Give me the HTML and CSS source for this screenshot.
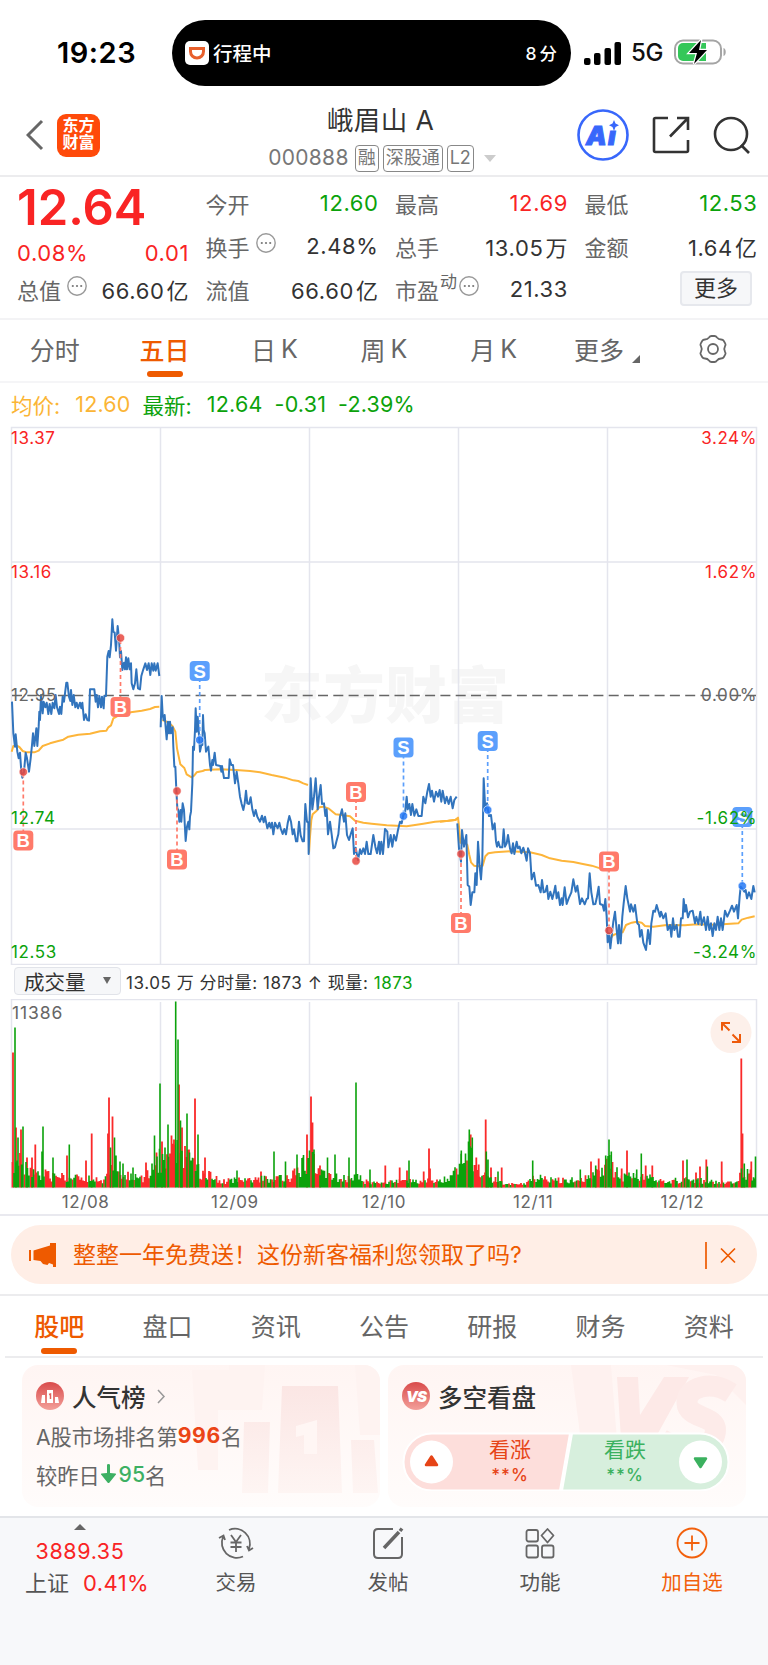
FILE: index.html
```html
<!DOCTYPE html>
<html lang="zh-CN">
<head>
  <meta charset="UTF-8">
  <meta name="viewport" content="width=device-width, initial-scale=1.0">
  <title>峨眉山A 000888</title>
  <link rel="stylesheet" href="styles.css">
</head>
<body>
  <div class="status">
    <span class="time">19:23</span>
    <div class="island">
      <svg width="24" height="24" viewBox="0 0 24 24"><rect width="24" height="24" rx="5" fill="#fff"/><path d="M5.500 7.500h13v3a6.500 6.500 0 0 1-13 0z" fill="none" stroke="#e8602c" stroke-width="3"/></svg>
      <span>行程中</span>
      <span class="eta">8<u>分</u></span>
    </div>
    <svg class="signal" width="37" height="23" viewBox="0 0 37 23"><rect y="16" width="6.500" height="7" rx="2"/><rect x="10" y="11" width="6.500" height="12" rx="2"/><rect x="20.500" y="6" width="6.500" height="17" rx="2"/><rect x="30.500" width="6.500" height="23" rx="2"/></svg>
    <span class="net">5G</span>
    <svg class="battery" width="53" height="26" viewBox="0 0 53 26"><rect x="1" y="1.500" width="46" height="23" rx="8" fill="none" stroke="#a5a5a5" stroke-width="2"/><path d="M49.500 9c3 1 3 7 0 8z" fill="#a5a5a5"/><path d="M9 4h23v18H9a5 5 0 0 1-5-5V9a5 5 0 0 1 5-5z" fill="#34c759"/><path d="M27 1L15 14h8l-3 11 13-14h-8z" stroke="#fff" stroke-width="2.500" paint-order="stroke"/></svg>
  </div>

  <header class="header">
    <div class="left">
      <svg width="18" height="32" viewBox="0 0 18 32"><path d="M16 2L2 16l14 14" fill="none" stroke="#666" stroke-width="3"/></svg>
      <div class="logo">东方<br>财富</div>
    </div>
    <div class="title">
      <h1>峨眉山 A</h1>
      <div class="code">000888 <i>融</i><i>深股通</i><i>L2</i><b></b></div>
    </div>
    <div class="right">
      <svg width="52" height="52" viewBox="0 0 52 52"><circle cx="26" cy="26" r="24.500" fill="#fff" stroke="#3867fb" stroke-width="2.600"/><text x="9" y="36" class="ai">A</text><text x="31" y="36" class="ai">ı</text><path d="M37 11l1.500 3.500 3.500 1.800-3.500 1.700L37 22l-1.500-4-3.500-1.700 3.500-1.800z" fill="#3867fb"/></svg>
      <svg width="38" height="38" viewBox="0 0 38 38" fill="none" stroke="#333" stroke-width="2.600"><path d="M16 2H3.500Q2 2 2 3.500v31Q2 36 3.500 36h31q1.500 0 1.500-1.500V24M25 2h11v12M36 2L18 20.500"/></svg>
      <svg width="38" height="38" viewBox="0 0 38 38" fill="none" stroke="#333" stroke-width="2.600"><circle cx="18" cy="18" r="16"/><path d="M28 29l8 8"/></svg>
    </div>
  </header>

  <section class="quote">
    <div class="main">
      <div class="price">12.64</div>
      <div class="cell red chg"><span>0.08%</span><span>0.01</span></div>
      <div class="cell"><label>总值<svg class="dots" viewBox="0 0 20 20"><use href="#dots"/></svg></label><span>66.60<u>亿</u></span></div>
    </div>
    <div class="grid">
      <div class="cell"><label>今开</label><span class="green">12.60</span></div>
      <div class="cell"><label>最高</label><span class="red">12.69</span></div>
      <div class="cell"><label>最低</label><span class="green">12.53</span></div>
      <div class="cell"><label>换手<svg class="dots" viewBox="0 0 20 20"><use href="#dots"/></svg></label><span>2.48%</span></div>
      <div class="cell"><label>总手</label><span>13.05<u>万</u></span></div>
      <div class="cell"><label>金额</label><span>1.64<u>亿</u></span></div>
      <div class="cell"><label>流值</label><span>66.60<u>亿</u></span></div>
      <div class="cell"><label>市盈<sup>动</sup><svg class="dots" viewBox="0 0 20 20"><use href="#dots"/></svg></label><span>21.33</span></div>
      <div class="cell end"><button class="more">更多</button></div>
    </div>
  </section>

  <nav class="tabs">
    <a>分时</a>
    <a class="active">五日</a>
    <a>日<s>K</s></a>
    <a>周<s>K</s></a>
    <a>月<s>K</s></a>
    <a class="drop">更多</a>
    <a><svg width="30" height="30" viewBox="0 0 30 30" fill="none" stroke="#666" stroke-width="1.800"><path d="M11 3.500Q12 2 13.500 2h3Q18 2 19 3.500q1.500 2 4 2 2 0 2.700 1.300l1.600 2.800q.7 1.200-.3 2.700-1.500 2.700 0 5.400 1 1.500.3 2.700l-1.600 2.800q-.7 1.300-2.700 1.300-2.500 0-4 2Q18 28 16.500 28h-3Q12 28 11 26.500q-1.500-2-4-2-2 0-2.700-1.300l-1.600-2.800Q2 19.200 3 17.700q1.500-2.700 0-5.400-1-1.500-.3-2.700l1.600-2.800Q5 5.500 7 5.500q2.500 0 4-2z"/><circle cx="15" cy="15" r="5"/></svg></a>
  </nav>

  <div class="legend"><span class="avg">均价:</span><span class="avg n first">12.60</span><span>最新:</span><span class="n first">12.64</span><span class="n">-0.31</span><span class="n">-2.39%</span></div>

  <svg class="chart" width="768" height="539" viewBox="0 426 768 539">
    <text x="261" y="718" textLength="248" class="mark">东方财富</text>
    <g class="lines">
      <path d="M160.500 427v537M309.500 427v537M458.500 427v537M607.500 427v537M11 562h745M11 829h745"/>
      <rect x="11.500" y="427.500" width="745" height="537"/>
    </g>
    <path d="M12 695.500h744" stroke="#666" stroke-width="1.500" stroke-dasharray="10 5.300"/>
    <g id="curves"></g>
    <g id="marks"></g>
    <g class="axis">
      <text x="11" y="444" class="up">13.37</text>
      <text x="11" y="578" class="up">13.16</text>
      <text x="11" y="701">12.95</text>
      <text x="11" y="823.500" class="down">12.74</text>
      <text x="11" y="957.500" class="down">12.53</text>
      <text x="757" y="444" class="up r">3.24%</text>
      <text x="757" y="578" class="up r">1.62%</text>
      <text x="757" y="701" class="r">0.00%</text>
      <text x="757" y="823.500" class="down r">-1.62%</text>
      <text x="757" y="957.500" class="down r">-3.24%</text>
    </g>
  </svg>

  <div class="volbar">
    <button>成交量 <b></b></button>
    <span>13.05 万 分时量: 1873 ↑ 现量: <em>1873</em></span>
  </div>

  <svg class="vol" width="768" height="190" viewBox="0 999 768 190">
    <g class="lines">
      <path d="M160.500 1002v185M309.500 1002v185M458.500 1002v185M607.500 1002v185"/>
      <rect x="11.500" y="999.500" width="745" height="188"/>
    </g>
    <g id="bars"></g>
    <text x="12" y="1019" class="max">11386</text>
    <circle cx="731" cy="1032.500" r="20.500" fill="#fdf0ea"/>
    <path d="M722 1030.500v-7.500h8M722 1023l7.500 7.500M732.500 1034.500l7.500 7.500M740 1034v8h-8" fill="none" stroke="#ee5a0b" stroke-width="2"/>
  </svg>
  <div class="dates"><span>12/08</span><span>12/09</span><span>12/10</span><span>12/11</span><span>12/12</span></div>

  <div class="notice">
    <div class="banner">
      <svg width="27" height="24" viewBox="0 0 27 24" fill="#ee5a00"><path d="M0 7h2v11H0zM4.500 7.500L21 2.500V0h6v24h-3v-2.500l-4-1.500-1.500 2-4.500-1-2.500-3L4.500 17z"/></svg>
      <span>整整一年免费送！这份新客福利您领取了吗?</span>
      <svg width="31" height="28" viewBox="0 0 31 28" stroke="#ee5a00" stroke-width="1.700"><path d="M1 1v27M16 7.500l14 14M30 7.500l-14 14"/></svg>
    </div>
  </div>

  <nav class="tabs info">
    <a class="active">股吧</a>
    <a>盘口</a>
    <a>资讯</a>
    <a>公告</a>
    <a>研报</a>
    <a>财务</a>
    <a>资料</a>
  </nav>

  <div class="cards">
    <div class="card">
      <svg class="bg" width="190" height="141" viewBox="0 0 190 141">
        <path d="M2 5h37V0h36l-3 45H28v60H8z" fill="#fef3f1"/><path d="M165 0h25v70h-20z" fill="#fef3f1"/>
        <g fill="url(#fade)"><path d="M54 57h26l-2 71H52zM92 21h56l4 107H88zM161 75h23l4 53h-25z"/></g>
        <path d="M106 61l21-6v34h-13V70l-8 2z" fill="#fff6f4"/>
      </svg>
      <h3><svg width="28" height="28" viewBox="0 0 28 28"><circle cx="14" cy="14" r="14" fill="url(#badge)"/><path d="M6 13h3v8H5zM11 8h6v13h-6zM19 15h3l1 6h-4z" fill="#fff"/><path d="M13 12.500l1.500-.5v5" stroke="#e0605c" stroke-width="1.500" fill="none"/></svg>人气榜<svg class="arrow" width="9" height="15" viewBox="0 0 9 15"><path d="M1 1l6 6.500L1 14" fill="none" stroke="#999" stroke-width="1.500"/></svg></h3>
      <p>A股市场排名第<b>996</b>名</p>
      <p class="second">较昨日<svg width="15" height="20" viewBox="0 0 15 20"><path d="M6 1q0-1 1.500-1T9 1v8l5.500.5q1 .5 0 1.500L8.500 18.500q-1 1-2 0L.5 11q-1-1 0-1.500L6 9z" fill="#3db063"/></svg><em>95</em>名</p>
    </div>
    <div class="card">
      <svg class="bg" width="180" height="141" viewBox="0 0 180 141">
        <path d="M5 0h40l8 100H18zM100 0h80v40L150 10z" fill="#fef1ef"/>
        <path d="M51 12h21l2 38 24-38h25L80 90H56z" fill="#fde9e7"/>
        <path d="M165 28c-20-13-45-6-44 10 1 18 36 10 27 34-7 16-35 14-53 2" fill="none" stroke="#fdebe9" stroke-width="21"/>
      </svg>
      <h3><svg width="28" height="28" viewBox="0 0 28 28"><circle cx="14" cy="14" r="14" fill="url(#badge)"/><text x="4" y="19.500" class="vs">VS</text></svg>多空看盘</h3>
      <div class="vote">
        <svg class="pill" width="328" height="59" viewBox="0 0 328 59"><path d="M30 1.500h138l-10 57H30a28 28 0 0 1 0-57z" fill="#fddedb" stroke="#fff" stroke-width="2"/><path d="M170 1.500h128a28 28 0 0 1 0 57H160z" fill="#d7efdd" stroke="#fff" stroke-width="2"/><circle cx="29.500" cy="30" r="21.500" fill="#fff"/><circle cx="298.500" cy="30" r="21.500" fill="#fff"/><path d="M29.500 24.500l5.500 8.500H24z" fill="#e64417" stroke="#e64417" stroke-width="2.500" stroke-linejoin="round"/><path d="M298.500 35l5.500-8.500h-11z" fill="#3bb15f" stroke="#3bb15f" stroke-width="2.500" stroke-linejoin="round"/></svg>
        <div class="bull">看涨<span>**%</span></div>
        <div class="bear">看跌<span>**%</span></div>
      </div>
    </div>
  </div>

  <footer class="bottom">
    <div class="index">
      <b></b>
      <span class="red">3889.35</span>
      <div>上证 <span class="red">0.41%</span></div>
    </div>
    <a><svg width="36" height="34" viewBox="0 0 36 34" fill="none" stroke="#666" stroke-width="1.800"><path d="M11 4a15 15 0 0 1 20 19M25 30.500A15 15 0 0 1 5 11M1 12l4.500-2.500L7 14M29 20l2 4.500 4-2.500M13 9l5 7 5-7M18 16v10M12.500 16.500h11M12.500 21h11"/></svg>交易</a>
    <a><svg width="32" height="34" viewBox="0 0 32 34" fill="none" stroke="#666" stroke-width="2"><path d="M21 3H6Q2 3 2 7v21q0 4 4 4h20q4 0 4-4V11"/><path d="M12 22l15-16M28 5l2-2.500" stroke-width="3.500"/></svg>发帖</a>
    <a><svg width="30" height="34" viewBox="0 0 30 34" fill="none" stroke="#666" stroke-width="1.800"><rect x="1.500" y="4" width="11.500" height="11.500" rx="2"/><rect x="1.500" y="19.500" width="11.500" height="12" rx="2"/><rect x="17" y="19.500" width="11.500" height="12" rx="2"/><path d="M22.500 3l6 6.500-6 7-6-7z" stroke-linejoin="round"/></svg>功能</a>
    <a class="add"><svg width="32" height="34" viewBox="0 0 32 34" fill="none" stroke="#f2600c" stroke-width="1.800"><circle cx="16" cy="17" r="14.500"/><path d="M16 9.500v15M8.500 17h15"/></svg>加自选</a>
  </footer>

  <svg width="0" height="0" class="defs">
    <defs>
      <g id="dots"><circle cx="10" cy="10" r="9.200" fill="none" stroke="#999" stroke-width="1.400"/><circle cx="5.800" cy="10" r="1.100" fill="#777"/><circle cx="10" cy="10" r="1.100" fill="#777"/><circle cx="14.200" cy="10" r="1.100" fill="#777"/></g>
      <linearGradient id="badge" x2="0" y2="1"><stop stop-color="#d94b4b"/><stop offset="1" stop-color="#f3a09a"/></linearGradient>
      <linearGradient id="fade" x2="0" y2="1"><stop stop-color="#fbe6e4"/><stop offset="1" stop-color="#fef5f3"/></linearGradient>
    </defs>
  </svg>
  <script src="chart.js"></script>
</body>
</html>
```
FILE: styles.css
```css
* {
  box-sizing: border-box;
}
body {
  margin: 0;
  width: 768px;
  height: 1665px;
  overflow: hidden;
  background: #fff;
  color: #333;
  font-family: Inter, "Noto Sans CJK SC", sans-serif;
}
svg {
  display: block;
  flex: none;
}
i, em, u, s {
  font-style: normal;
  text-decoration: none;
}
a {
  white-space: nowrap;
}
.defs {
  position: absolute;
}
.red {
  color: #f92424;
}
.green {
  color: #0ba20b;
}

/* status bar */
.status {
  display: flex;
  align-items: center;
  height: 106px;
  padding-left: 57px;
}
.time {
  width: 115px;
  margin-top: -2px;
  font-size: 29px;
  font-weight: 600;
  letter-spacing: 0.5px;
  color: #000;
}
.island {
  display: flex;
  align-items: center;
  gap: 5px;
  width: 399px;
  height: 66px;
  padding: 0 14px 0 13px;
  border-radius: 33px;
  background: #000;
  color: #fff;
  font-size: 19.500px;
  font-weight: 500;
}
.island span {
  margin: -2px 0 0 -1px;
}
.island .eta {
  margin-left: auto;
  font-size: 17.500px;
}
.eta u {
  margin-left: 3px;
}
.signal {
  margin-left: 13px;
}
.net {
  width: 43px;
  margin: -1px 0 0 10px;
  font-size: 24px;
  font-weight: 500;
  letter-spacing: -0.3px;
  color: #111;
}
.battery {
  margin-top: -2px;
}

/* header */
.header {
  display: grid;
  grid-template-columns: 1fr auto 1fr;
  height: 71px;
  padding: 0 17px 0 11px;
  border-bottom: 2px solid #ececee;
}
.left {
  display: flex;
  align-items: center;
  gap: 13px;
  height: 58px;
  padding-left: 15px;
}
.logo {
  width: 43px;
  height: 43px;
  padding-top: 3px;
  border-radius: 9px;
  background: #ff4a0a;
  color: #fff;
  font-size: 16px;
  font-weight: 700;
  line-height: 17.500px;
  text-align: center;
}
.title {
  text-align: center;
}
h1 {
  margin: 0;
  padding-right: 1px;
  font-size: 26.500px;
  font-weight: 400;
  line-height: 28px;
  letter-spacing: 0.4px;
}
.code {
  display: flex;
  align-items: center;
  justify-content: center;
  gap: 4px;
  margin-top: 10px;
  padding-left: 2px;
  font-size: 21px;
  line-height: 28px;
  letter-spacing: 0.3px;
  color: #777;
}
.code i {
  height: 27px;
  padding: 0 2px;
  border: 1.500px solid #888;
  border-radius: 4px;
  font-size: 18px;
  line-height: 23px;
  letter-spacing: 0;
}
.code i:first-of-type {
  margin-left: 2px;
}
.code b {
  margin-left: 6px;
  border: 6px solid transparent;
  border-top: 7px solid #ccc;
  border-bottom: 0;
}
.right {
  display: flex;
  align-items: center;
  justify-content: flex-end;
  gap: 23px;
  height: 58px;
}
.ai {
  fill: #3867fb;
  stroke: #3867fb;
  stroke-width: 1;
  font: italic 900 26px Inter;
}

/* quote */
.quote {
  display: flex;
  gap: 17px;
  height: 143px;
  padding: 4px 11px 0 17px;
  border-bottom: 2px solid #f3f3f5;
}
.main {
  width: 172px;
}
.grid {
  display: grid;
  grid-template-columns: repeat(3, 172.500px);
  grid-auto-rows: 43px;
  column-gap: 17px;
}
.price {
  height: 52px;
  color: #f92424;
  font-size: 49px;
  font-weight: 600;
  line-height: 53px;
  letter-spacing: 0;
}
.cell {
  display: flex;
  align-items: center;
  justify-content: space-between;
  height: 43px;
  font-size: 22px;
  letter-spacing: 0.6px;
  white-space: nowrap;
}
.cell span {
  margin-right: -0.5px;
}
.chg {
  height: 34px;
  padding-top: 6px;
}
.cell label {
  display: flex;
  color: #666;
  font-size: 22px;
  letter-spacing: 0;
}
.cell u {
  margin-left: 2px;
}
.dots {
  width: 20px;
  height: 20px;
  margin: 3px 0 0 6px;
}
sup {
  margin: -2px -4px 0 1px;
  font-size: 17px;
  line-height: 22px;
}
.end {
  justify-content: flex-end;
}
.more {
  width: 72px;
  height: 35px;
  margin: -1px 5px 0 0;
  padding: 0;
  border: 2px solid #e6e8ed;
  border-radius: 4px;
  background: #f6f7f9;
  color: #333;
  font: inherit;
  font-size: 22px;
  line-height: 28px;
}

/* tabs */
.tabs {
  display: grid;
  grid-template-columns: repeat(7, minmax(0, 1fr));
  height: 63px;
  border-bottom: 2px solid #f5f5f7;
}
.tabs a {
  position: relative;
  display: flex;
  align-items: center;
  justify-content: center;
  height: 61px;
  padding-bottom: 3px;
  color: #666;
  font-size: 25px;
}
.tabs s {
  margin-left: 5px;
}
.tabs .active {
  color: #ee5a00;
  font-weight: 500;
}
.tabs .active::after {
  content: "";
  position: absolute;
  bottom: 4px;
  left: calc(50% - 18px);
  width: 36px;
  height: 6px;
  border-radius: 3px;
  background: #ee5a00;
}
.tabs .drop {
  padding-right: 9px;
}
.tabs .drop::after {
  content: "";
  position: absolute;
  right: 18px;
  bottom: 18px;
  border: 4px solid #666;
  border-top-color: transparent;
  border-left-color: transparent;
}

/* charts */
.legend {
  display: flex;
  align-items: center;
  gap: 12px;
  height: 43px;
  padding: 0 0 1px 11px;
  color: #0ba20b;
  font-size: 21.500px;
}
.legend .n {
  letter-spacing: 0.2px;
}
.legend .first {
  margin-left: 3px;
}
.legend .avg {
  color: #fbb535;
}
.lines {
  fill: none;
  stroke: #e4e5ed;
  stroke-width: 1.500;
}
.mark {
  fill: #f6f6f6;
  font-size: 61.500px;
  font-weight: 900;
}
.axis text {
  fill: #666;
  font-size: 17px;
  letter-spacing: 0.6px;
}
.axis .up {
  fill: #f92424;
}
.axis .down {
  fill: #0ba20b;
}
.axis .r {
  text-anchor: end;
}
.curve {
  fill: none;
  stroke: #3174bd;
  stroke-width: 2;
  stroke-linejoin: round;
  vector-effect: non-scaling-stroke;
}
.curve.avg {
  stroke: #fdb53a;
}
.tag {
  fill: #fff;
  font-family: "Liberation Sans", sans-serif;
  font-size: 18.500px;
  font-weight: 700;
  text-anchor: middle;
}
.volbar {
  display: flex;
  align-items: center;
  gap: 5px;
  height: 34px;
  padding: 0 0 2px 14px;
  font-size: 17px;
  letter-spacing: 0.55px;
  white-space: pre;
}
.volbar button {
  display: flex;
  align-items: center;
  justify-content: space-between;
  width: 107px;
  height: 28px;
  padding: 0 9px 1px;
  border: 1.500px solid #e1e3e9;
  border-radius: 4px;
  background: #f6f7f9;
  color: #333;
  font: inherit;
  font-size: 20.500px;
  letter-spacing: 0;
}
.volbar b {
  border: 4px solid transparent;
  border-top: 7px solid #666;
  border-bottom: 0;
}
.volbar em {
  color: #0ba20b;
}
.max {
  fill: #666;
  font-size: 17.500px;
  letter-spacing: 0.9px;
}
.dates {
  display: flex;
  height: 27px;
  padding: 3px 11px 0;
  border-bottom: 2px solid #e9e9ef;
  color: #666;
  font-size: 17px;
  line-height: 20px;
  letter-spacing: 0.6px;
}
.dates span {
  flex: 1;
  text-align: center;
}

/* notice */
.notice {
  height: 80px;
  padding: 9px 11px;
  border-bottom: 2px solid #ececee;
}
.banner {
  display: flex;
  align-items: center;
  height: 59px;
  padding: 0 21px 0 18px;
  border-radius: 30px;
  background: #ffeee6;
  color: #ee5a00;
  font-size: 23px;
}
.banner span {
  margin: -3px 0 0 17px;
}
.banner svg:last-child {
  margin-left: auto;
}
.info {
  margin: 0 5px;
  height: 62px;
  border-bottom-color: #ececee;
}
.info .active::after {
  bottom: 3px;
}

/* cards */
.cards {
  display: flex;
  gap: 8px;
  height: 158px;
  padding: 7px 22px 0;
}
.card {
  position: relative;
  width: 358px;
  height: 142px;
  padding: 16px 14px;
  border-radius: 16px;
  background: linear-gradient(#fff5f3, #fffcfb);
  overflow: hidden;
}
.bg {
  position: absolute;
  top: 0;
  right: 0;
}
.card > :not(.bg) {
  position: relative;
}
h3 {
  display: flex;
  align-items: center;
  gap: 8px;
  height: 30px;
  margin: 0;
  font-size: 24.500px;
  font-weight: 500;
}
.arrow {
  margin-left: 3px;
}
.card p {
  display: flex;
  align-items: center;
  height: 30px;
  margin: 9px 0 0;
  color: #666;
  font-size: 21.200px;
}
.card p b {
  color: #eb4416;
  letter-spacing: 0.6px;
}
.card p em {
  margin-left: 3px;
  color: #3db063;
  font-weight: 500;
}
.second svg {
  margin-left: 1px;
}
.vs {
  fill: #fff;
  font: italic 900 15px Inter;
  letter-spacing: -1px;
}
.vote {
  display: flex;
  width: 328px;
  height: 59px;
  margin: 21px 0 0;
  font-size: 21px;
  line-height: 25px;
  text-align: center;
}
.pill {
  position: absolute;
}
.vote div {
  position: relative;
  width: 50px;
  padding-top: 5px;
  color: #e64417;
  white-space: nowrap;
}
.vote span {
  display: block;
  margin-top: 1px;
  font-size: 17px;
  font-weight: 500;
  letter-spacing: 1px;
}
.bull {
  margin-left: 83px;
}
.vote .bear {
  margin-left: 65px;
  color: #3bb15f;
}

/* bottom bar */
.bottom {
  display: grid;
  grid-template-columns: 160px repeat(4, 152px);
  height: 150px;
  border-top: 2px solid #e3e5e9;
  background: #f7f8fa;
  color: #555;
  font-size: 20.500px;
  text-align: center;
}
.bottom a {
  padding-top: 8px;
  line-height: 46px;
}
.bottom a svg {
  margin: 0 auto;
}
.bottom .add {
  color: #f2600c;
}
.index {
  padding-top: 6px;
  line-height: 32px;
}
.index b {
  display: block;
  width: 0;
  margin: 0 auto 5px;
  border: 6px solid transparent;
  border-top: 0;
  border-bottom: 6px solid #666;
}
.index > span {
  display: block;
  font-size: 21.500px;
  letter-spacing: 0.6px;
}
.index div {
  margin-right: -14px;
  font-size: 22px;
  word-spacing: 8px;
}
.index div span {
  letter-spacing: 0.4px;
}
```
FILE: chart.js
```js
const NS = "http://www.w3.org/2000/svg";

function add(parent, name, attrs, text) {
  const el = document.createElementNS(NS, name);
  for (const key in attrs) el.setAttribute(key, attrs[key]);
  if (text) el.textContent = text;
  parent.appendChild(el);
  return el;
}

// each curve has its own origin, points are in thirds of a pixel
const curves = [
  [0, 600, "avg", "35 455 40 438 50 437 58 441 68 453 80 457 103 457 116 452 128 438 150 430 175 423 190 419 205 410 235 404 270 401 300 394 319 392 325 382 333 376 340 355 355 347 375 343 392 337 425 332 450 327 465 321 478 320"],
  [150, 650, "avg", "37 210 55 217 68 229 76 245 81 295 91 343 103 354 110 373 125 382 133 376 140 367 158 363 165 360 210 358 258 360 300 363 330 367 365 375 405 383 430 391 445 393 460 400 474 405"],
  [150, 650, "avg", "477 608 480 560 484 510 488 493 500 482 508 472 520 470 535 475 557 493 575 495 600 499 615 512 640 518 665 521 710 526 770 529 820 521 855 515 895 512 920 509"],
  [440, 700, "avg", "0 365 45 360 54 353 57 380 61 428 75 428 82 435 88 465 93 487 102 497 113 499 128 497 136 469 145 460 165 457 210 454 270 457 305 465 330 475 365 482 400 486 425 491 455 497 490 508 503 511"],
  [440, 700, "avg", "508 720 520 705 533 700 548 697 558 675 575 668 590 665 605 668 615 678 640 680 680 675 735 676 770 673 825 674 895 670 905 659 925 653 944 649"],
  [0, 600, "", "36 305 40 400 45 440 47 403 52 455 56 475 60 458 64 515 67 533 72 515 77 458 81 475 87 515 92 475 96 435 99 400 103 438 109 385 112 438 116 380 118 335 120 360 123 285 128 340 131 305 136 322 140 308 145 342 149 312 154 342 158 308 163 325 167 285 171 322 177 342 180 320 184 342 188 290 192 305 199 248 202 248 207 290 211 303 213 270 217 315 221 285 226 322 230 308 234 325 240 308 244 325 247 308 252 360 257 343 262 360 267 362 270 268 283 268 287 305 290 285 294 322 298 288 303 322 306 290 311 325 313 288 318 288 322 170 326 153 329 172 333 135 337 58 340 95 344 98 348 152 353 78 357 115 360 172 363 153 367 210 372 188 375 208 378 172 381 208 385 175 389 208 393 190 395 250 400 268 405 250 409 208 414 265 420 268 424 228 430 208 436 190 441 210 446 190 451 225 455 190 460 212 463 190 467 212 473 190 478 228"],
  [150, 650, "", "32 232 35 138 38 195 41 210 44 195 47 232 50 268 54 215 57 250 60 215 63 250 68 232 70 290 73 350 76 350 79 420 82 475 85 480 88 515 92 480 94 515 98 460 102 480 107 573 111 530 115 515 118 538 120 500 123 485 127 400 129 290 132 300 135 240 137 175 140 245 143 200 148 268 150 305 154 285 157 285 159 195 161 240 164 250 168 305 175 290 180 345 183 362 187 330 189 345 194 308 198 345 211 348 214 365 216 348 222 384 236 384 239 328 244 345 249 345 255 400 260 365 265 400 270 440 275 462 280 480 284 460 288 422 292 460 297 462 302 442 307 478 312 498 317 480 322 500 330 515 336 497 341 517 345 500 352 535 358 518 362 533 366 518 370 553 375 518 383 535 388 518 392 535 398 552 403 537 408 553 413 520 418 498 423 515 428 553 432 538 438 574 442 574 447 515 452 556 458 574 462 574 466 462 471 515 475 518 476 612 482 385 487 478 492 440 497 385 503 478 507 440 512 405 516 462 522 460 526 498 530 478 534 553 540 515 545 553 550 595 555 592 559 575 565 553 570 500 576 478 582 515 586 490 591 555 597 570 603 550 608 535 612 612 617 593 624 630 630 598 634 612 640 595 645 612 650 575 655 612 662 612 670 555 676 590 681 610 687 575 690 612 694 575 699 612 705 537 712 545 715 592 722 555 727 590 732 555 738 572 744 540 750 515 755 520 760 495 765 490 770 440 773 478 778 462 783 495 787 462 793 497 799 478 805 498 815 498 820 440 826 460 832 425 837 402 842 440 846 422 852 455 858 425 864 440 869 420 874 455 878 422 885 460 890 440 896 462 902 440 908 475 913 450 920 440"],
  [440, 700, "", "52 370 57 445 63 485 66 390 72 440 79 405 83 555 88 560 92 615 97 577 103 577 106 520 110 555 114 425 119 500 123 538 127 480 131 235 136 330 141 310 147 348 153 345 158 388 164 370 168 425 171 440 175 425 180 442 187 442 191 388 195 440 200 430 204 405 210 445 215 460 219 430 223 462 230 425 234 445 239 440 244 460 250 443 255 460 260 482 264 445 270 460 275 538 282 518 288 557 295 555 302 577 306 540 311 577 316 575 321 557 325 597 331 575 337 597 342 577 346 557 350 595 355 577 360 615 365 595 368 615 374 562 380 612 386 595 394 577 400 538 407 575 412 557 420 612 426 595 434 613 440 597 444 595 449 520 454 577 460 613 466 612 470 595 476 560 480 612 488 615 492 632 496 597 500 650 503 727 507 700 511 745 517 690 520 665 525 635 530 690 534 730 537 675 542 730 547 650 551 610 557 558 562 595 570 635 573 613 580 635 585 615 592 670 597 675 600 710 605 690 610 728 618 750 624 690 630 732 634 670 640 632 645 635 650 615 655 632 660 650 663 635 670 655 677 640 683 690 690 675 694 710 699 655 703 690 710 675 714 710 719 710 723 655 728 655 731 597 735 635 738 615 744 652 750 635 758 632 765 670 769 650 775 672 781 635 785 675 792 652 798 690 803 650 808 690 813 670 818 708 823 670 828 690 833 650 838 690 843 655 848 690 855 632 862 650 870 632 876 617 882 635 890 615 894 655 899 590 902 560 908 568 913 575 917 570 921 595 927 577 934 597 940 558 944 577"]
];
const curveLayer = document.getElementById("curves");
curves.forEach(([x, y, cls, points]) => {
  add(curveLayer, "polyline", { points, class: "curve " + cls, transform: `translate(${x} ${y}) scale(.33333)` });
});

// buy / sell marks: type, x, label y, dot y
const marks = [
  ["B", 23.3, 840.5, 772], ["B", 120.5, 707, 638], ["B", 177, 859.5, 791], ["S", 199.7, 671, 740],
  ["B", 356, 792, 861], ["S", 403.5, 747.5, 816], ["B", 461, 923, 854], ["S", 487.7, 741, 810],
  ["B", 609, 861.5, 930.5], ["S", 742.3, 817, 886]
];
const markLayer = document.getElementById("marks");
marks.forEach(([type, x, y, dot]) => {
  const buy = type === "B";
  const color = buy ? "#ff7a6a" : "#5b9ffc";
  add(markLayer, "line", { x1: x, x2: x, y1: y, y2: dot, stroke: color, "stroke-width": 1.7, "stroke-dasharray": "4 3" });
  add(markLayer, "circle", { cx: x, cy: dot, r: 4.2, fill: buy ? "#e8483f" : "#2478f5", "fill-opacity": 0.85, stroke: "#fff", "stroke-width": 0.6 });
  add(markLayer, "rect", { x: x - 10, y: y - 10, width: 20, height: 20, rx: 4, fill: color });
  add(markLayer, "text", { x: x, y: y + 6.6, class: "tag" }, type);
});

// volume
const level = [[12, 40], [20, 42], [30, 22], [45, 20], [55, 14], [80, 12], [105, 10], [112, 35], [120, 18], [140, 12], [150, 18], [158, 38], [172, 45], [180, 60], [190, 35], [205, 20], [220, 8], [250, 10], [290, 15], [305, 35], [315, 38], [325, 18], [345, 12], [357, 14], [370, 5], [400, 8], [440, 8], [455, 22], [462, 36], [470, 48], [478, 18], [492, 12], [505, 4], [525, 4], [535, 14], [560, 10], [580, 10], [600, 22], [610, 35], [620, 14], [645, 14], [660, 8], [690, 10], [720, 6], [735, 8], [742, 20], [756, 18]];
const peaks = [
  [13, 135, "r"], [15, 160, "g"], [16, 60, "r"], [18, 50, "g"], [21, 58, "r"], [23, 61, "g"], [27, 30, "r"], [32, 30, "r"], [35.3, 43, "r"], [42, 36, "g"], [43, 61, "g"], [53, 30, "g"], [67, 32, "r"], [69.3, 43, "g"], [86, 27, "r"], [91.7, 54, "r"], [108, 54, "r"], [109, 90, "r"], [110.5, 40, "g"], [112.5, 71, "r"], [114.5, 50, "g"], [116, 32, "g"], [120, 26, "g"], [123, 24, "g"], [133, 20, "g"], [146, 25, "r"], [154.5, 52, "g"], [157, 31, "g"],
  [160, 104, "g"], [162, 46, "r"], [165, 40, "g"], [168, 63, "g"], [171.5, 52, "r"], [174, 48, "r"], [175.7, 186, "g"], [178, 148, "g"], [179, 103, "r"], [180.5, 67, "g"], [182, 60, "r"], [187, 74, "g"], [189, 38, "r"], [195, 89, "r"], [198, 53, "g"], [205, 30, "r"], [237, 17, "g"], [261, 16, "r"], [274, 36, "g"], [285.5, 26, "g"], [297, 33, "g"], [303, 30, "g"], [307, 53, "r"],
  [311, 91, "r"], [312.5, 65, "r"], [314, 38, "g"], [320, 22, "r"], [327.5, 30, "g"], [335, 33, "g"], [349, 30, "g"], [356, 105, "g"], [370, 18, "g"], [385.3, 22, "r"], [399.7, 20, "r"], [407, 17, "r"], [409, 27, "g"], [423.7, 16, "r"], [429, 39, "r"], [430, 19, "r"],
  [461.3, 37, "g"], [469.3, 58, "g"], [470.7, 53, "r"], [472.3, 50, "g"], [476.3, 30, "r"], [478.7, 23, "r"], [485.7, 68, "r"], [486.3, 36, "g"], [488, 28, "g"], [491, 20, "r"], [498, 16, "g"], [501.7, 20, "r"], [532.7, 27, "g"], [580.3, 18, "g"], [591, 26, "r"], [595.7, 22, "g"], [598.7, 29, "r"], [605.7, 32, "g"],
  [609, 48, "g"], [611.3, 36, "g"], [621.7, 19, "r"], [627, 37, "r"], [636.7, 18, "g"], [641.3, 34, "g"], [645.7, 22, "r"], [652.3, 22, "r"], [683, 27, "r"], [687, 28, "g"], [696, 15, "r"], [700, 21, "r"], [706.3, 28, "r"], [707.3, 21, "g"], [721.7, 26, "r"], [741.3, 129, "r"], [742.5, 54, "r"], [744.3, 24, "g"], [751.3, 26, "r"], [755.5, 31, "g"]
];
let seed = 11;
function rand() {
  seed = (seed * 16807) % 2147483647;
  return seed / 2147483647;
}
const bars = { r: "", g: "" };
let color = "g";
let i = 0;
for (let x = 12.5; x < 756; x += 1.5) {
  while (i < level.length - 2 && level[i + 1][0] < x) i++;
  const [x0, h0] = level[i];
  const [x1, h1] = level[i + 1];
  const top = h0 + (h1 - h0) * (x - x0) / (x1 - x0);
  if (rand() < 0.4) color = color === "r" ? "g" : "r";
  bars[color] += `M${x.toFixed(1)} 1187.5v-${(top * (0.3 + 0.7 * rand()) + 1).toFixed(1)}`;
}
peaks.forEach(([x, h, c]) => {
  bars[c] += `M${x} 1187.5v-${h}`;
});
const barLayer = document.getElementById("bars");
add(barLayer, "path", { d: bars.r, stroke: "#fa2a2a", "stroke-width": 1.8 });
add(barLayer, "path", { d: bars.g, stroke: "#0ba20b", "stroke-width": 1.6 });
```
